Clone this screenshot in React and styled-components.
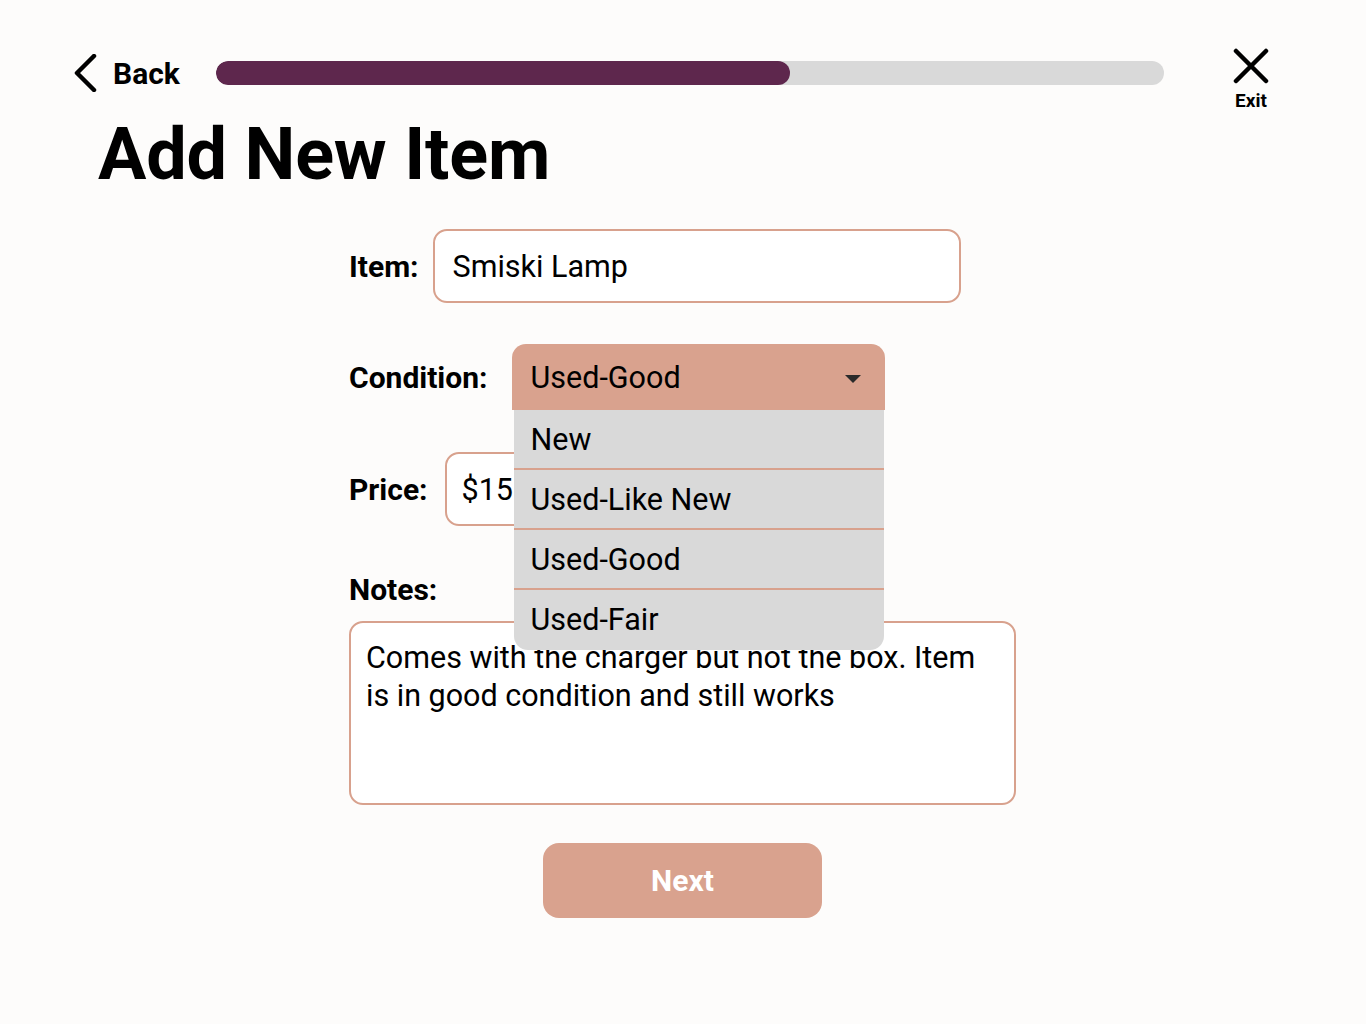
import styled, { createGlobalStyle } from 'styled-components';

const GlobalStyle = createGlobalStyle`
  body {
    margin: 0;
    background: #fdfcfb;
    font-family: Roboto, "Liberation Sans", sans-serif;
    color: #000;
  }
`;

const conditions = ['New', 'Used-Like New', 'Used-Good', 'Used-Fair'];

const App = () => {
  return (
    <Page>
      <GlobalStyle />
      <Header>
        <BackButton>
          <svg width="24" height="38" viewBox="0 0 24 38">
            <path d="M20 2 L3 19 L20 36" fill="none" stroke="#000" strokeWidth="4.5" strokeLinecap="round" strokeLinejoin="round" />
          </svg>
          <span>Back</span>
        </BackButton>
        <Progress>
          <ProgressFill style={{ width: '60.6%' }} />
        </Progress>
        <ExitButton>
          <svg width="36" height="38" viewBox="0 0 36 38">
            <path d="M3 4 L33 34 M33 4 L3 34" fill="none" stroke="#000" strokeWidth="4.5" strokeLinecap="round" />
          </svg>
          <span>Exit</span>
        </ExitButton>
      </Header>

      <Title>Add New Item</Title>

      <Form>
        <Row>
          <Label $gap={14}>Item:</Label>
          <TextBox $width={528}>Smiski Lamp</TextBox>
        </Row>

        <Row $top={41}>
          <Label $gap={24}>Condition:</Label>
          <SelectWrap>
            <Select>
              <span>Used-Good</span>
              <Caret />
            </Select>
            <Menu>
              {conditions.map((c) => (
                <MenuItem key={c}>{c}</MenuItem>
              ))}
            </Menu>
          </SelectWrap>
        </Row>

        <Row $top={42}>
          <Label $gap={17}>Price:</Label>
          <TextBox $width={200} $pad={15}>$15</TextBox>
        </Row>

        <NotesLabel>Notes:</NotesLabel>
        <NotesBox>
          Comes with the charger but not the box. Item is in good condition and still works
        </NotesBox>

        <NextButton>Next</NextButton>
      </Form>
    </Page>
  );
};

export default App;

const Page = styled.div`
  width: 1366px;
  min-height: 1024px;
  box-sizing: border-box;
`;

const Header = styled.div`
  display: flex;
  align-items: flex-start;
  padding: 47px 97px 0 74px;
`;

const BackButton = styled.div`
  display: flex;
  align-items: center;
  gap: 15px;
  margin-top: 7px;
  height: 38px;
  font-size: 30px;
  font-weight: 700;
`;

const Progress = styled.div`
  flex: 1;
  height: 24px;
  margin: 14px 69px 0 36px;
  border-radius: 12px;
  background: #d9d9d9;
  overflow: hidden;
`;

const ProgressFill = styled.div`
  height: 100%;
  border-radius: 12px;
  background: #5e274d;
`;

const ExitButton = styled.div`
  display: flex;
  flex-direction: column;
  align-items: center;
  gap: 6px;
  font-size: 19px;
  font-weight: 700;
  line-height: 1;
`;

const Title = styled.h1`
  margin: 0;
  padding: 8px 0 0 98px;
  font-size: 72px;
  font-weight: 700;
  line-height: 74px;
  letter-spacing: -0.2px;
`;

const Form = styled.div`
  width: 667px;
  margin: 37px 0 0 349px;
  display: flex;
  flex-direction: column;
`;

const Row = styled.div`
  display: flex;
  align-items: center;
  margin-top: ${(p) => p.$top || 0}px;
`;

const Label = styled.div`
  font-size: 30px;
  font-weight: 700;
  margin-right: ${(p) => p.$gap}px;
`;

const TextBox = styled.div`
  box-sizing: border-box;
  width: ${(p) => p.$width}px;
  height: 74px;
  display: flex;
  align-items: center;
  padding: 0 ${(p) => p.$pad || 18}px;
  border: 2px solid #d8a18d;
  border-radius: 14px;
  background: #fff;
  font-size: 30.5px;
`;

const SelectWrap = styled.div`
  position: relative;
`;

const Select = styled.div`
  box-sizing: border-box;
  width: 373px;
  height: 66px;
  display: flex;
  align-items: center;
  justify-content: space-between;
  padding: 0 24px 0 19px;
  background: #d9a28e;
  border-radius: 14px 14px 0 0;
  font-size: 30.5px;
`;

const Caret = styled.div`
  width: 0;
  height: 0;
  border-left: 8px solid transparent;
  border-right: 8px solid transparent;
  border-top: 8px solid #2a2a2a;
  margin-top: 4px;
`;

const Menu = styled.div`
  position: absolute;
  top: 66px;
  left: 2px;
  right: 1px;
  z-index: 2;
  background: #d9d9d9;
  border-radius: 0 0 14px 14px;
  overflow: hidden;
`;

const MenuItem = styled.div`
  height: 58px;
  display: flex;
  align-items: center;
  padding-left: 17px;
  font-size: 30.5px;
  & + & {
    border-top: 2px solid #d8a18d;
  }
  &:last-child {
    height: 60px;
    padding-bottom: 2px;
    box-sizing: border-box;
    height: 62px;
  }
`;

const NotesLabel = styled.div`
  margin-top: 46px;
  font-size: 30px;
  font-weight: 700;
`;

const NotesBox = styled.div`
  box-sizing: border-box;
  margin-top: 14px;
  height: 184px;
  padding: 16px 30px 0 15px;
  border: 2px solid #d8a18d;
  border-radius: 14px;
  background: #fff;
  font-size: 30.5px;
  line-height: 38px;
`;

const NextButton = styled.div`
  align-self: center;
  margin-top: 38px;
  width: 279px;
  height: 75px;
  display: flex;
  align-items: center;
  justify-content: center;
  background: #d9a28e;
  border-radius: 16px;
  color: #fff;
  font-size: 30px;
  font-weight: 700;
`;
